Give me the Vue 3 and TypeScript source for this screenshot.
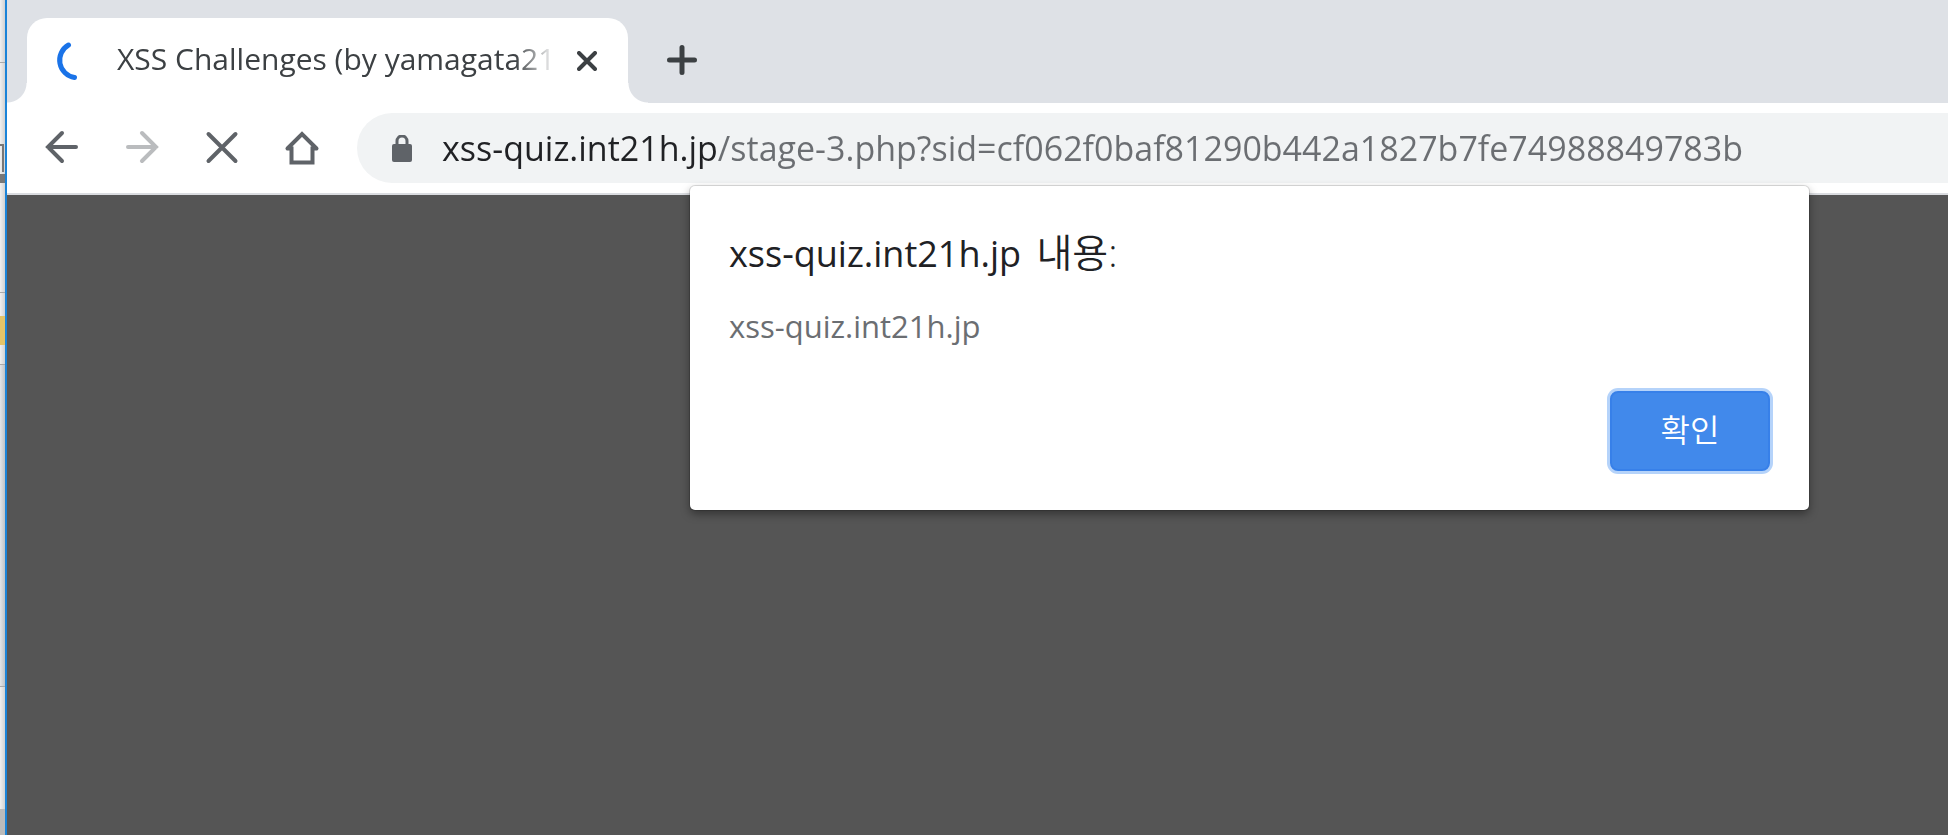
<script setup lang="ts">
import { onMounted, ref } from 'vue'

const tabTitle = 'XSS Challenges (by yamagata21)'
const host = 'xss-quiz.int21h.jp'
const url = ref(host + '/stage-3.php?sid=cf062f0baf81290b442a1827b7fe74988849783b')
const address = ref<HTMLInputElement | null>(null)
const hostWidth = ref(270)

// The host is drawn darker than the path, so the colour stop follows its measured width.
onMounted(() => {
  const ctx = document.createElement('canvas').getContext('2d')
  if (!ctx || !address.value) return
  const s = getComputedStyle(address.value)
  ctx.font = `${s.fontWeight} ${s.fontSize} ${s.fontFamily}`
  hostWidth.value = Math.round(ctx.measureText(host).width)
})
</script>

<template>
  <div class="desktop">
    <aside class="behind" aria-hidden="true">
      <i class="rule r1"></i><i class="glyph g1"></i><i class="glyph g2"></i><i class="rule r2"></i>
      <i class="rule r3"></i><i class="folder"></i><i class="rule r4"></i><i class="pane"></i><i class="foot"></i>
    </aside>
    <div class="window">
      <header class="tabs">
        <div class="tab">
          <svg class="spinner" viewBox="0 0 40 40" aria-hidden="true">
            <path d="M13.500 4A17.500 17.500 0 0 0 19.500 36.500" />
          </svg>
          <span class="title">{{ tabTitle }}</span>
          <button class="icon close" aria-label="Close tab">
            <svg viewBox="0 0 20 20"><path d="M2 2l16 16M18 2L2 18" /></svg>
          </button>
        </div>
        <button class="icon add" aria-label="New tab">
          <svg viewBox="0 0 30 30"><path d="M15 2.500v25M2.500 15h25" /></svg>
        </button>
      </header>
      <nav class="toolbar">
        <button class="icon nav" aria-label="Back">
          <svg viewBox="0 0 40 40"><path d="M34 19H6M20 5L6 19l14 14" /></svg>
        </button>
        <button class="icon nav dim" aria-label="Forward" disabled>
          <svg viewBox="0 0 40 40"><path d="M6 19h28M20 5l14 14-14 14" /></svg>
        </button>
        <button class="icon nav" aria-label="Stop">
          <svg viewBox="0 0 40 40"><path d="M6.500 6l27 27M33.500 6l-27 27" /></svg>
        </button>
        <button class="icon nav" aria-label="Home">
          <svg viewBox="0 0 40 40"><path d="M5.500 20.500L20 6l14.500 14.500M5.500 20.500H9.500V34.500h21V20.500h4" /></svg>
        </button>
        <label class="omnibox">
          <svg class="lock" viewBox="0 0 20 27" aria-hidden="true">
            <rect x="0" y="9" width="20" height="18" rx="2" />
            <path d="M5 10V6a5 5 0 0 1 10 0v4" />
          </svg>
          <input
            ref="address"
            v-model="url"
            type="text"
            aria-label="Address"
            spellcheck="false"
            :style="{ '--host-width': hostWidth + 'px' }"
          />
        </label>
      </nav>
      <main class="page"></main>
      <section class="dialog" role="alertdialog" aria-labelledby="dialog-title" aria-describedby="dialog-text">
        <h1 id="dialog-title">xss-quiz.int21h.jp <span lang="ko">내용:</span></h1>
        <p id="dialog-text">xss-quiz.int21h.jp</p>
        <button class="ok">확인</button>
      </section>
    </div>
  </div>
</template>

<style>
body {
  margin: 0;
}
</style>

<style scoped>
.desktop {
  display: flex;
  min-height: 100vh;
  overflow: hidden;
  font-family: "Open Sans", "Noto Sans CJK KR", sans-serif;
  font-weight: 400;
}
.behind {
  position: relative;
  flex: none;
  width: 5px;
  background: linear-gradient(90deg, #f0f0f0, #d2d2d2);
}
.behind i {
  position: absolute;
  left: 0;
  width: 5px;
}
.rule { height: 1px; background: #aaa; }
.r1 { top: 62px; }
.r2 { top: 292px; }
.r3 { top: 364px; }
.r4 { top: 686px; }
.behind .glyph { background: #777; }
.behind .g1 {
  top: 144px;
  box-sizing: border-box;
  width: 4px;
  height: 28px;
  border: solid #777;
  border-width: 2px 2px 0 0;
  background: none;
}
.g2 { top: 174px; height: 9px; }
.folder { top: 316px; height: 29px; background: #e3c468; }
.pane { top: 365px; height: 321px; background: linear-gradient(90deg, #e2e5e9, #c0c3c6); }
.foot { bottom: 0; height: 26px; background: #bbb; }
.window {
  position: relative;
  display: flex;
  flex: 1;
  flex-direction: column;
  min-width: 0;
  border-left: 2px solid #1a83d8;
}
.tabs {
  display: flex;
  align-items: flex-end;
  height: 103px;
  padding-left: 20px;
  background: #dee1e6;
}
.tab {
  position: relative;
  display: flex;
  align-items: center;
  box-sizing: border-box;
  width: 601px;
  height: 85px;
  padding: 0 31px 0 28px;
  border-radius: 20px 20px 0 0;
  background: #fff;
}
.tab::before,
.tab::after {
  content: "";
  position: absolute;
  bottom: 0;
  width: 20px;
  height: 20px;
}
.tab::before {
  right: 100%;
  background: radial-gradient(circle at 0 0, transparent 19px, #fff 20px);
}
.tab::after {
  left: 100%;
  background: radial-gradient(circle at 100% 0, transparent 19px, #fff 20px);
}
.spinner {
  flex: none;
  width: 40px;
  height: 40px;
  fill: none;
  stroke: #1a73e8;
  stroke-width: 5;
  stroke-linecap: round;
}
.title {
  flex: 1;
  min-width: 0;
  margin: 0 22px 4px;
  overflow: hidden;
  color: #3c4043;
  font-size: 30px;
  line-height: 40px;
  white-space: nowrap;
  mask-image: linear-gradient(90deg, #000 calc(100% - 40px), transparent);
}
.icon {
  display: block;
  flex: none;
  padding: 0;
  border: 0;
  background: none;
  color: #3c4043;
}
.icon svg {
  display: block;
  width: 100%;
  fill: none;
  stroke: currentColor;
  stroke-width: 4;
  stroke-linecap: round;
}
.close {
  width: 20px;
}
.add {
  width: 30px;
  margin: 0 0 28px 39px;
}
.add svg {
  stroke-width: 5;
}
.toolbar {
  display: flex;
  align-items: center;
  gap: 40px;
  height: 90px;
  padding-left: 35px;
  border-bottom: 2px solid #dadce0;
  background: #fff;
}
.nav {
  width: 40px;
  color: #5f6368;
}
.dim {
  color: #babcbe;
}
.omnibox {
  display: flex;
  flex: 1;
  align-items: center;
  gap: 30px;
  height: 70px;
  margin-left: -5px;
  padding-left: 35px;
  border-radius: 35px 0 0 35px;
  background: #f1f3f4;
}
.lock {
  flex: none;
  width: 20px;
  height: 27px;
  fill: #5f6368;
}
.lock path {
  fill: none;
  stroke: #5f6368;
  stroke-width: 3;
}
.omnibox input {
  flex: 1;
  min-width: 0;
  height: 60px;
  padding: 0;
  border: 0;
  outline: 0;
  background: linear-gradient(90deg, #202124 var(--host-width), #6b6e72 var(--host-width));
  background-clip: text;
  color: #6b6e72;
  -webkit-text-fill-color: transparent;
  font: inherit;
  font-size: 34px;
}
.page {
  flex: 1;
  background: #555;
}
.dialog {
  position: absolute;
  top: 186px;
  right: 139px;
  display: flex;
  flex-direction: column;
  box-sizing: border-box;
  width: 1119px;
  max-width: 90%;
  padding: 40px 39px 39px;
  border-radius: 5px;
  background: #fff;
  box-shadow: 0 0 0 1px rgba(0, 0, 0, 0.12), 0 4px 10px rgba(0, 0, 0, 0.4);
}
h1,
p {
  margin: 0;
  font-weight: inherit;
}
h1 {
  height: 52px;
  color: #202124;
  font-size: 36px;
  line-height: 52px;
}
h1 span {
  margin-left: 6px;
  font-size: 39px;
  font-weight: 350;
}
p {
  margin-top: 26px;
  color: #6b6e72;
  font-size: 31px;
  line-height: 44px;
}
.ok {
  align-self: flex-end;
  width: 160px;
  height: 80px;
  margin-top: 43px;
  padding: 0 0 6px;
  border: 2px solid #3780e9;
  border-radius: 8px;
  background: #4189eb;
  box-shadow: 0 0 0 3px #b5d3fa;
  color: #fff;
  font: inherit;
  font-size: 32px;
  font-weight: 350;
}
</style>
